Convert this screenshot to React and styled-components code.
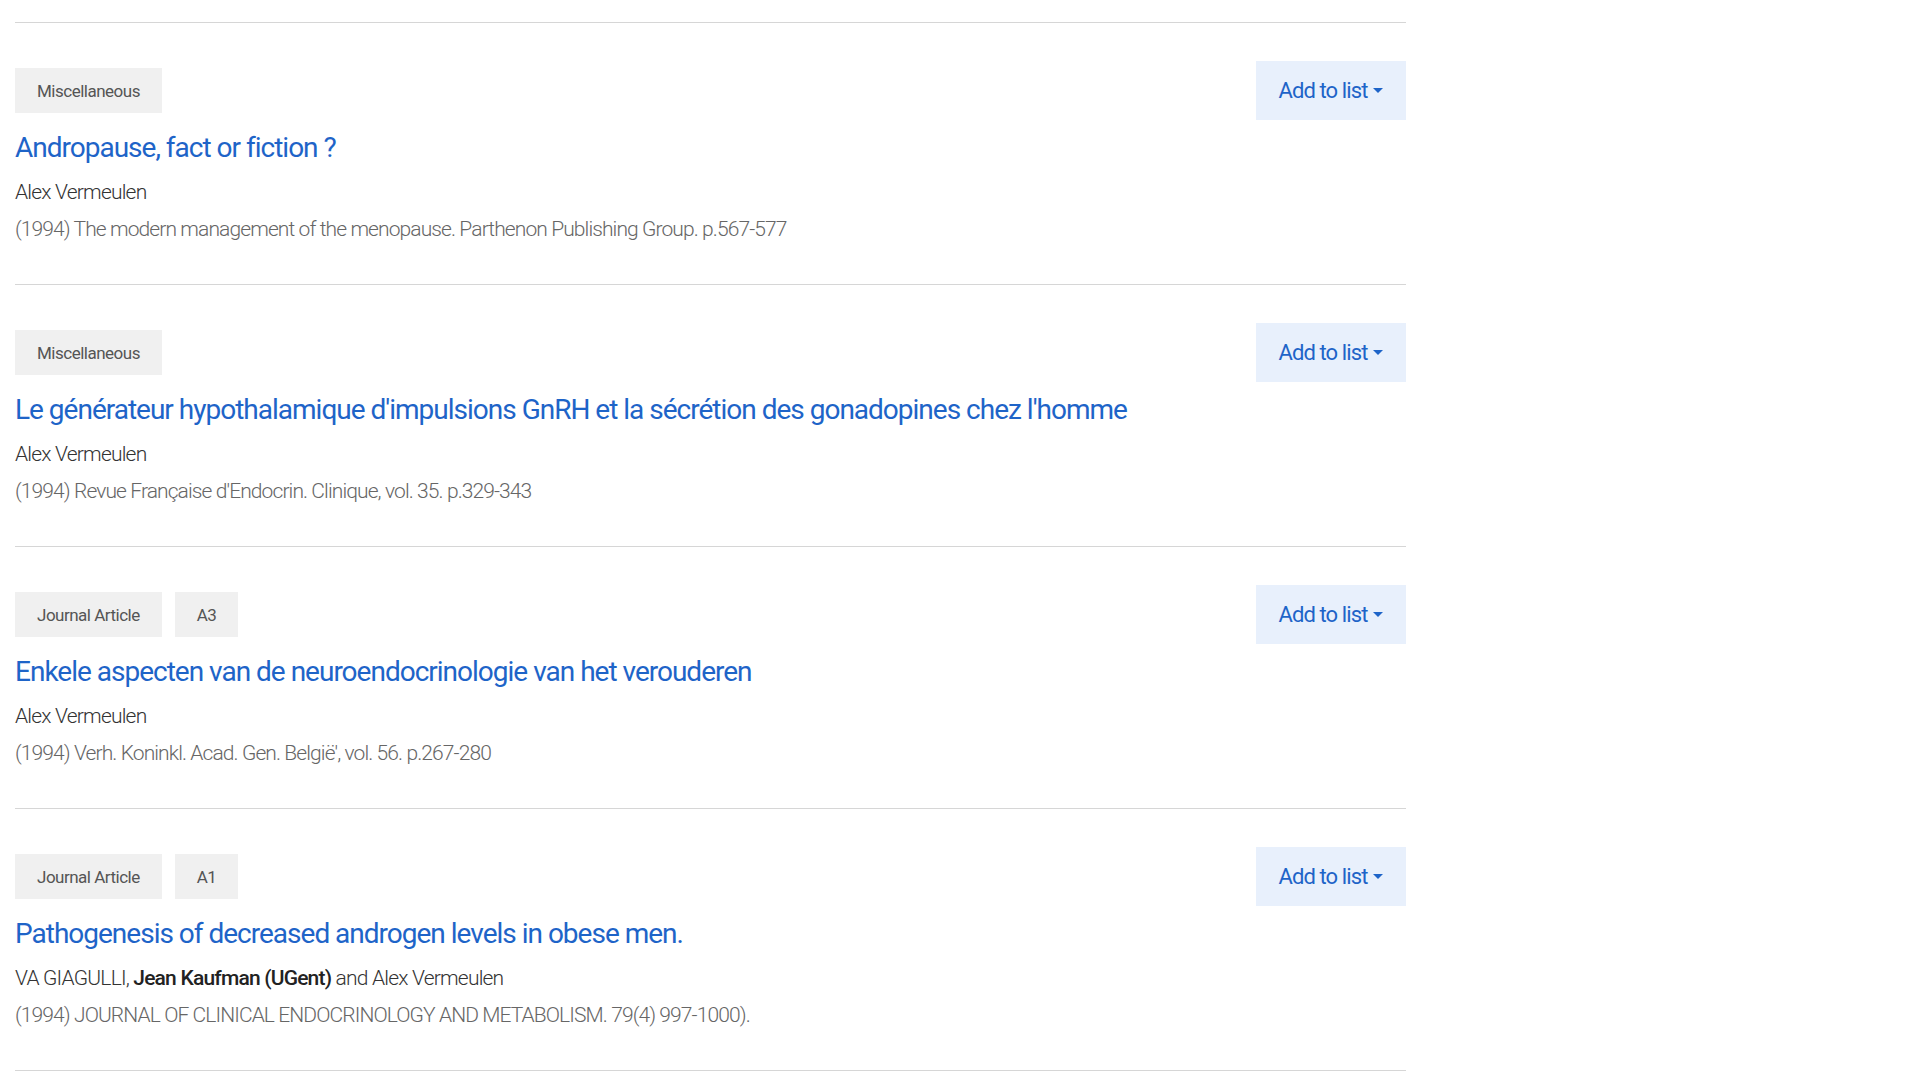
import React from 'react';
import styled, { createGlobalStyle } from 'styled-components';

const GlobalStyle = createGlobalStyle`
    html {
        overflow-y: scroll;
    }
    body {
        margin: 0;
        background: #fff;
        font-family: Roboto, "Liberation Sans", sans-serif;
        font-weight: 300;
        color: #333;
    }
`

const List = styled.ul`
    list-style: none;
    margin: 0;
    padding: 22px 0 0 15px;
    width: 1391px;
`

const Item = styled.li`
    border-top: 1px solid #d6d6d6;
    padding: 38px 0 37px;
    &:last-child {
        border-bottom: 1px solid #d6d6d6;
    }
`

const Header = styled.div`
    display: flex;
    align-items: center;
    justify-content: space-between;
`

const Badges = styled.div`
    display: flex;
    gap: 13px;
`

const Badge = styled.span`
    display: inline-flex;
    align-items: center;
    height: 45px;
    padding: 0 22px;
    background: #f0f0f0;
    color: #555;
    font-size: 17px;
    font-weight: 400;
    letter-spacing: -0.5px;
`

const AddButton = styled.button`
    display: inline-flex;
    align-items: center;
    gap: 6px;
    height: 59px;
    width: 150px;
    justify-content: center;
    border: 0;
    background: #e8f0fc;
    color: #1e64c8;
    font-family: inherit;
    font-weight: 400;
    font-size: 22px;
    letter-spacing: -0.9px;
    cursor: pointer;
`

const Caret = styled.span`
    width: 0;
    height: 0;
    border-left: 5px solid transparent;
    border-right: 5px solid transparent;
    border-top: 5px solid #1e64c8;
`

const Title = styled.a`
    display: block;
    margin-top: 8px;
    color: #1e64c8;
    font-size: 28px;
    font-weight: 400;
    letter-spacing: -1px;
    line-height: 40px;
    text-decoration: none;
`

const Authors = styled.div`
    margin-top: 6px;
    font-size: 21px;
    letter-spacing: -0.8px;
    line-height: 36px;
    color: #333;
    b {
        font-weight: 500;
        color: #222;
    }
`

const Source = styled.div`
    margin-top: 1px;
    font-size: 21px;
    letter-spacing: -0.9px;
    line-height: 36px;
    color: #666;
`

const items = [
    {
        badges: ['Miscellaneous'],
        title: 'Andropause, fact or fiction ?',
        authors: <>Alex Vermeulen</>,
        source: '(1994) The modern management of the menopause. Parthenon Publishing Group. p.567-577',
    },
    {
        badges: ['Miscellaneous'],
        title: "Le générateur hypothalamique d'impulsions GnRH et la sécrétion des gonadopines chez l'homme",
        authors: <>Alex Vermeulen</>,
        source: "(1994) Revue Française d'Endocrin. Clinique, vol. 35. p.329-343",
    },
    {
        badges: ['Journal Article', 'A3'],
        title: 'Enkele aspecten van de neuroendocrinologie van het verouderen',
        authors: <>Alex Vermeulen</>,
        source: "(1994) Verh. Koninkl. Acad. Gen. België', vol. 56. p.267-280",
    },
    {
        badges: ['Journal Article', 'A1'],
        title: 'Pathogenesis of decreased androgen levels in obese men.',
        authors: <>VA GIAGULLI, <b>Jean Kaufman (UGent)</b> and Alex Vermeulen</>,
        source: '(1994) JOURNAL OF CLINICAL ENDOCRINOLOGY AND METABOLISM. 79(4) 997-1000).',
    },
];

export default function App() {
    return (
        <>
            <GlobalStyle />
            <List>
                {items.map((item, i) => (
                    <Item key={i}>
                        <Header>
                            <Badges>
                                {item.badges.map((b) => <Badge key={b}>{b}</Badge>)}
                            </Badges>
                            <AddButton>Add to list <Caret /></AddButton>
                        </Header>
                        <Title href="#">{item.title}</Title>
                        <Authors>{item.authors}</Authors>
                        <Source>{item.source}</Source>
                    </Item>
                ))}
            </List>
        </>
    )
}
